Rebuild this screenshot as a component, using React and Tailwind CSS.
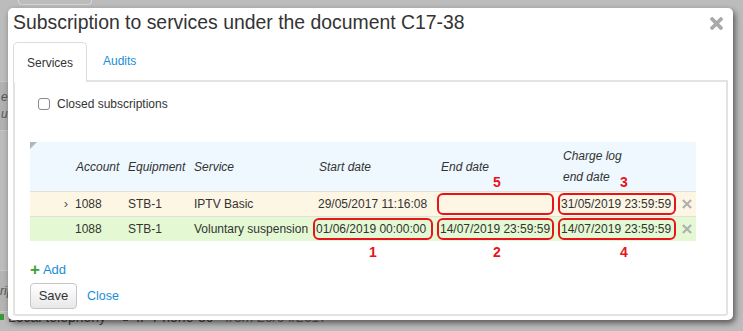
import React from 'react';

const rows = [
  {
    expand: true,
    account: '1088',
    equipment: 'STB-1',
    service: 'IPTV Basic',
    start: '29/05/2017 11:16:08',
    startBoxed: false,
    end: '',
    charge: '31/05/2019 23:59:59',
    bg: 'bg-[#fdf6e4]',
  },
  {
    expand: false,
    account: '1088',
    equipment: 'STB-1',
    service: 'Voluntary suspension',
    start: '01/06/2019 00:00:00',
    startBoxed: true,
    end: '14/07/2019 23:59:59',
    charge: '14/07/2019 23:59:59',
    bg: 'bg-[#e4f9d3]',
  },
];

const cols = 'grid grid-cols-[40px_53px_66px_122px_124px_121px_122px_18px]';

function CloseX({ size = 12, stroke = 3, color = '#a8a8a8' }) {
  return (
    <svg width={size} height={size} viewBox="0 0 12 12">
      <path d="M2 2 L10 10 M10 2 L2 10" stroke={color} strokeWidth={stroke} strokeLinecap="square" />
    </svg>
  );
}

function DateBox({ value, w }) {
  return (
    <span className={`flex items-center h-[22px] ${w} border-2 border-[#e8141b] rounded-[6px] pl-[1px] whitespace-nowrap`}>
      {value}
    </span>
  );
}

function Mark({ n, className }) {
  return (
    <span className={`absolute text-[14px] font-bold leading-[14px] text-[#e8141b] ${className}`}>{n}</span>
  );
}

export default function App() {
  return (
    <div className="relative w-[743px] h-[331px] overflow-hidden bg-[#bcbcbc] text-[#333] font-['Liberation_Sans',Arial,sans-serif]">
      {/* --- page behind the dialog --- */}
      <div className="flex flex-col h-full">
        <div className="ml-[18px] w-[74px] h-[5px] border border-t-0 border-[#d6d6d6] rounded-b-[4px]" />
        <div className="mt-[76px] h-[50px] w-[20px] bg-[#b1b1b1] border-y border-[#c8c8c8] flex flex-col justify-center pl-[1px] text-[12px] italic leading-[17px] text-[#555]">
          <span>er</span>
          <span>ur</span>
        </div>
        <div className="mt-[139px] h-[42px] w-[20px] bg-[#b4b4b4] border-y border-[#c8c8c8] flex items-center text-[12px] italic text-[#555]">
          <span>rip</span>
        </div>
        <div className="flex items-center gap-[12px] text-[14px] leading-[16px] text-[#444] -mt-[3px]">
          <span className="flex items-center gap-[3px]">
            <span className="w-[4px] h-[6px] bg-[#3a9a3a]" />
            <span className="ml-[1px]">Local telephony</span>
          </span>
          <span className="flex items-center gap-[3px]">
            <svg width="15" height="10" viewBox="0 0 15 10"><rect x="0" y="1" width="15" height="4" fill="#555" /><rect x="5" y="5" width="5" height="4" fill="#555" /></svg>
            <span>IP Phone-30</span>
          </span>
          <span className="italic text-[#666]">from 20/04/2017</span>
        </div>
      </div>

      {/* --- modal --- */}
      <div className="absolute left-[8px] top-[8px] w-[725px] h-[312px] bg-white rounded-[5px] shadow-[2px_3px_6px_rgba(0,0,0,0.55)] flex flex-col">
        <div className="flex items-start justify-between pl-[5px] pr-[10px] pt-[3px]">
          <h1 className="text-[19.4px] leading-[23px] text-[#333]">Subscription to services under the document C17-38</h1>
          <div className="mt-[6px]">
            <CloseX size={13} stroke={3.4} color="#a9a9a9" />
          </div>
        </div>

        {/* --- Tabs --- */}
        <div className="flex items-end mt-[8px] ml-[5px] h-[38px] text-[12px]">
          <div className="relative z-10 h-[40px] -mb-[2px] px-[13px] flex items-center bg-white border border-b-0 border-[#dcdcdc] rounded-t-[5px] text-[#333]">
            Services
          </div>
          <div className="h-[38px] ml-[3px] px-[13px] flex items-center text-[#1a8ed8]">Audits</div>
        </div>

        <div className="mx-[5px] h-[236px] border-2 border-[#e3e3e3] rounded-b-[3px] text-[12px] pl-[15px] flex flex-col">
          <label className="flex items-center h-[16px] mt-[14px] ml-[8px] gap-[7px]">
            <span className="w-[12px] h-[12px] border border-[#8a8a8a] rounded-[3px] bg-white" />
            <span>Closed subscriptions</span>
          </label>

          {/* --- Table --- */}
          <div className="relative w-[666px] mt-[30px]">
            <div className={`${cols} h-[49px] bg-[#eef8fe] items-center italic text-[#333]`}>
              <div className="relative h-full">
                <svg className="absolute left-0 top-0" width="7" height="7" viewBox="0 0 7 7"><path d="M0 0 L7 0 L0 7 Z" fill="#b5b5b5" /></svg>
              </div>
              <div className="pl-[6px]">Account</div>
              <div className="pl-[5px]">Equipment</div>
              <div className="pl-[5px]">Service</div>
              <div className="pl-[8px]">Start date</div>
              <div className="pl-[6px]">End date</div>
              <div className="pl-[7px] leading-[21px]">
                Charge log
                <br />
                end date
              </div>
              <div />
            </div>

            {rows.map((r, i) => (
              <div key={i} className={`${cols} h-[25px] items-center border-t border-[#e2e0d8] ${r.bg}`}>
                <div className="flex justify-end pr-[2px] text-[13px] text-[#555]">{r.expand ? '›' : ''}</div>
                <div className="pl-[5px]">{r.account}</div>
                <div className="pl-[5px]">{r.equipment}</div>
                <div className="pl-[5px] whitespace-nowrap">{r.service}</div>
                <div className="pl-[2px]">
                  {r.startBoxed ? <DateBox value={r.start} w="w-[120px]" /> : <span className="pl-[5px] whitespace-nowrap">{r.start}</span>}
                </div>
                <div className="pl-[2px]"><DateBox value={r.end} w="w-[117px]" /></div>
                <div className="pl-[2px]"><DateBox value={r.charge} w="w-[118px]" /></div>
                <div className="flex justify-end pr-[4px]"><CloseX size={10} stroke={2.6} color="#b0b0b0" /></div>
              </div>
            ))}

            <Mark n="5" className="left-[463px] top-[33px]" />
            <Mark n="3" className="left-[590px] top-[33px]" />
            <Mark n="1" className="left-[339px] top-[103px]" />
            <Mark n="2" className="left-[463px] top-[103px]" />
            <Mark n="4" className="left-[590px] top-[103px]" />
          </div>

          <div className="flex items-center mt-[21px] h-[16px] text-[13px]">
            <span className="text-[#3ba336] font-bold text-[17px] leading-[16px] mr-[3px]">+</span>
            <span className="text-[#1a8ed8]">Add</span>
          </div>

          <div className="flex items-center mt-[5px] gap-[10px]">
            <button className="h-[26px] w-[47px] border border-[#c6c6c6] rounded-[4px] bg-gradient-to-b from-white to-[#e8e8e8] text-[13px] text-[#333]">Save</button>
            <span className="text-[#1a8ed8] text-[12.5px]">Close</span>
          </div>
        </div>
      </div>
    </div>
  );
}
